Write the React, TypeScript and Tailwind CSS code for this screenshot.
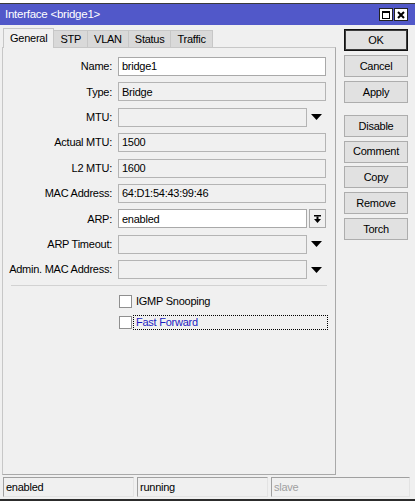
import React from 'react';

const fields = [
  { label: 'Name:', value: 'bridge1', kind: 'edit' },
  { label: 'Type:', value: 'Bridge', kind: 'readonly' },
  { label: 'MTU:', value: '', kind: 'drop' },
  { label: 'Actual MTU:', value: '1500', kind: 'readonly' },
  { label: 'L2 MTU:', value: '1600', kind: 'readonly' },
  { label: 'MAC Address:', value: '64:D1:54:43:99:46', kind: 'readonly' },
  { label: 'ARP:', value: 'enabled', kind: 'select' },
  { label: 'ARP Timeout:', value: '', kind: 'drop' },
  { label: 'Admin. MAC Address:', value: '', kind: 'drop' },
];

const Triangle = () => (
  <svg width="11" height="6" viewBox="0 0 11 6">
    <polygon points="0,0 11,0 5.5,6" fill="#000" />
  </svg>
);

const Field = ({ label, value, kind }: { label: string; value: string; kind: string }) => {
  const box =
    kind === 'edit' || kind === 'select'
      ? 'bg-white border-[#a9a9a9]'
      : 'bg-[#f0f0f0] border-[#b4b4b4]';
  return (
    <div className="flex items-center h-[19px]">
      <div className="w-[109px] text-right text-[#000]">{label}</div>
      <div className="ml-[6px] flex items-center">
        <div className={`h-[19px] border ${box} flex items-center pl-[3px] ${kind === 'edit' || kind === 'readonly' ? 'w-[208px]' : 'w-[189px]'}`}>
          {value}
        </div>
        {kind === 'drop' && (
          <div className="w-[19px] flex items-center justify-center">
            <Triangle />
          </div>
        )}
        {kind === 'select' && (
          <div className="ml-[2px] w-[17px] h-[19px] border border-[#a9a9a9] bg-[#f0f0f0] flex items-center justify-center">
            <svg width="7" height="8" viewBox="0 0 7 8">
              <rect x="0" y="0" width="7" height="1.5" fill="#000" />
              <rect x="2.5" y="1.5" width="2" height="3" fill="#000" />
              <polygon points="0,4 7,4 3.5,8" fill="#000" />
            </svg>
          </div>
        )}
      </div>
    </div>
  );
};

const Btn = ({ children, main }: { children: React.ReactNode; main?: boolean }) => (
  <div
    className={`w-[64px] h-[22px] flex items-center justify-center bg-[#e1e1e1] border ${
      main ? 'border-[#111] shadow-[inset_0_0_0_1px_#3c3c3c]' : 'border-[#adadad]'
    }`}
  >
    {children}
  </div>
);

export default function App() {
  return (
    <div
      className="w-[415px] h-[501px] overflow-hidden bg-[#f0f0f0] flex flex-col text-[11px] tracking-[-0.25px] text-black"
      style={{ fontFamily: '"Liberation Sans", Arial, sans-serif' }}
    >
      {/* edge of the window behind */}
      <div className="h-[3px] bg-white shrink-0" />
      <div className="h-px bg-[#3a3a3a] shrink-0" />

      {/* title bar */}
      <div className="h-[21px] shrink-0 bg-[#5158c9] flex items-center justify-between pl-[5px] pr-[7px]">
        <span className="text-white text-[11.5px]">Interface &lt;bridge1&gt;</span>
        <div className="flex gap-px">
          <div className="w-[14px] h-[13px] bg-white border border-[#222] flex items-center justify-center">
            <div className="w-[8px] h-[8px] border border-black border-t-2" />
          </div>
          <div className="w-[14px] h-[13px] bg-white border border-[#222] flex items-center justify-center">
            <svg width="8" height="8" viewBox="0 0 8 8">
              <path d="M1 1 L7 7 M7 1 L1 7" stroke="#000" strokeWidth="2" />
            </svg>
          </div>
        </div>
      </div>

      {/* body */}
      <div className="flex flex-1 min-h-0">
        <div className="w-[336px] flex flex-col pl-[2px] pt-[2px]">
          {/* tabs */}
          <div className="flex items-end h-[20px] pl-px shrink-0">
            <div className="h-[20px] px-[6px] flex items-center bg-[#f0f0f0] border border-b-0 border-[#c7c7c7] relative z-10 -mb-px pb-px">
              General
            </div>
            {['STP', 'VLAN', 'Status', 'Traffic'].map((t) => (
              <div
                key={t}
                className="h-[17px] px-[5px] flex items-center bg-[#d9d9d9] border border-b-0 border-l-0 border-[#c7c7c7]"
              >
                <span className="mx-[1px]">{t}</span>
              </div>
            ))}
          </div>

          {/* panel */}
          <div className="flex-1 border border-[#c7c7c7] border-r-[#a9a9a9] border-b-[#a9a9a9] flex flex-col pt-[9px]">
            <div className="flex flex-col gap-[6.4px]">
              {fields.map((f) => (
                <Field key={f.label} {...f} />
              ))}
            </div>

            <div className="mx-[8px] mt-[6px] h-px bg-[#d2d2d2]" />

            <div className="flex flex-col pl-[116px] pt-[9px] gap-[8px]">
              <div className="flex items-center h-[13px]">
                <div className="w-[13px] h-[13px] border border-[#8f8f8f] bg-white" />
                <span className="ml-[4px]">IGMP Snooping</span>
              </div>
              <div className="flex items-center h-[13px]">
                <div className="w-[13px] h-[13px] border border-[#8f8f8f] bg-white" />
                <span className="ml-px w-[195px] h-[15px] flex items-center pl-[2px] border border-dotted border-black text-[#1c1cc0]">
                  Fast Forward
                </span>
              </div>
            </div>
          </div>
        </div>

        {/* buttons */}
        <div className="flex flex-col pl-[8px] pt-[4px]">
          <div className="flex flex-col gap-[4px]">
            <Btn main>OK</Btn>
            <Btn>Cancel</Btn>
            <Btn>Apply</Btn>
          </div>
          <div className="flex flex-col gap-[3.7px] mt-[12px]">
            <Btn>Disable</Btn>
            <Btn>Comment</Btn>
            <Btn>Copy</Btn>
            <Btn>Remove</Btn>
            <Btn>Torch</Btn>
          </div>
        </div>
      </div>

      {/* status bar */}
      <div className="h-[24px] shrink-0 flex gap-[3px] pl-[3px] pr-[5px] pt-[2px] pb-[2px]">
        <div className="w-[131px] border border-[#a0a0a0] border-b-[#e3e3e3] border-r-[#e3e3e3] flex items-center pl-[2px]">enabled</div>
        <div className="w-[131px] border border-[#a0a0a0] border-b-[#e3e3e3] border-r-[#e3e3e3] flex items-center pl-[2px]">running</div>
        <div className="flex-1 border border-[#a0a0a0] border-b-[#e3e3e3] border-r-[#e3e3e3] flex items-center pl-[2px] text-[#a0a0a0]">slave</div>
      </div>
      <div className="h-[2px] bg-[#2c2c2c] shrink-0" />
    </div>
  );
}
